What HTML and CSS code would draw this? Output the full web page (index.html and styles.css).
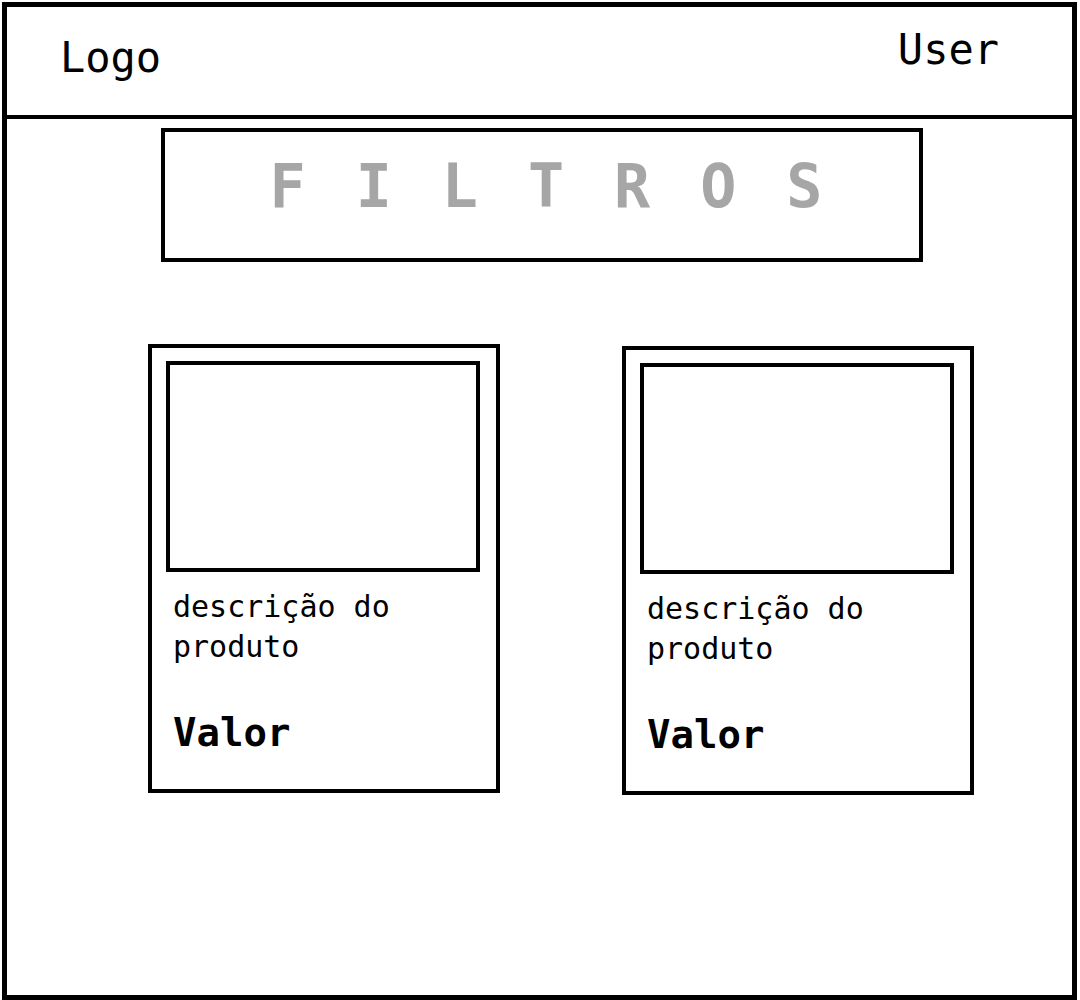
FILE: index.html
```html
<!DOCTYPE html>
<html lang="pt-BR">
<head>
    <meta charset="UTF-8">
    <meta name="viewport" content="width=device-width, initial-scale=1.0">
    <title>Loja - Wireframe</title>
    <link rel="stylesheet" href="styles.css">
</head>
<body>
    <div class="frame">
        <header class="header">
            <div class="logo">Logo</div>
            <div class="user">User</div>
        </header>

        <div class="filters">
            <span class="filters-label">FILTROS</span>
        </div>

        <div class="products">
            <div class="card">
                <div class="card-image"></div>
                <p class="card-description">descrição do produto</p>
                <div class="card-price">Valor</div>
            </div>

            <div class="card card-shifted">
                <div class="card-image"></div>
                <p class="card-description">descrição do produto</p>
                <div class="card-price">Valor</div>
            </div>
        </div>
    </div>
</body>
</html>
```

FILE: styles.css
```css
* {
    margin: 0;
    padding: 0;
    box-sizing: border-box;
    font-family: 'DejaVu Sans Mono', 'Liberation Mono', monospace;
}

body {
    background-color: #fff;
    color: #000;
}

.frame {
    margin: 2px 3px 0 2px;
    height: 998px;
    border: 5px solid #000;
}

.header {
    display: flex;
    justify-content: space-between;
    align-items: flex-start;
    height: 112px;
    border-bottom: 4px solid #000;
    padding: 0 73px 0 53px;
}

.logo,
.user {
    font-size: 42px;
    line-height: 50px;
}

.logo {
    padding-top: 26px;
}

.user {
    padding-top: 18px;
}

.filters {
    width: 762px;
    height: 134px;
    margin: 9px 0 0 154px;
    border: 4px solid #000;
    padding: 24px 0 0 58px;
    text-align: center;
}

.filters-label {
    font-size: 60px;
    line-height: 60px;
    font-weight: bold;
    letter-spacing: 50px;
    color: #a6a6a6;
}

.products {
    display: flex;
    align-items: flex-start;
    gap: 122px;
    margin-top: 82px;
    padding-left: 141px;
}

.card {
    width: 352px;
    height: 449px;
    border: 4px solid #000;
    padding: 13px 0 0 14px;
}

.card-shifted {
    margin-top: 2px;
}

.card-image {
    width: 314px;
    height: 211px;
    border: 4px solid #000;
}

.card-description {
    width: 240px;
    margin-top: 15px;
    padding-left: 7px;
    font-size: 30px;
    line-height: 40px;
}

.card-price {
    margin-top: 44px;
    padding-left: 7px;
    font-size: 39px;
    line-height: 44px;
    font-weight: bold;
}
```
